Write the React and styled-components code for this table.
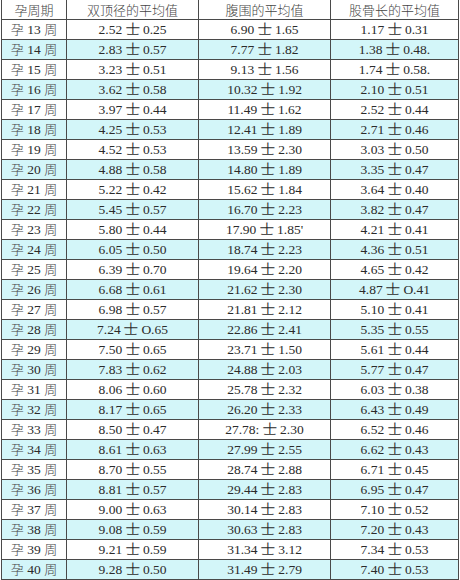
import React from "react";
import styled, { createGlobalStyle } from "styled-components";

const Global = createGlobalStyle`
  html, body { margin: 0; padding: 0; background: #ffffff; }
  body { font-family: "Liberation Serif", "Noto Sans CJK SC", serif; }
`;

const Wrap = styled.div`
  padding: 0 2px 0 1px;
  width: 460px;
  box-sizing: border-box;
`;

const Table = styled.table`
  width: 457px;
  border-collapse: collapse;
  table-layout: fixed;
  color: #2b2b2b;
  font-size: 13.5px;
`;

const Row = styled.tr`
  height: 19.9px;
  background: ${(p) => (p.$alt ? "#d3f6f9" : "#ffffff")};
`;

const Cell = styled.td`
  border: 1px solid #4a4a4a;
  padding: 0;
  text-align: center;
  vertical-align: middle;
  line-height: 18px;
  white-space: nowrap;
`;

const Head = styled(Cell).attrs({ as: "th" })`
  font-weight: 300;
  font-family: "Noto Sans CJK SC", sans-serif;
  font-size: 13px;
  color: #444;
  border-top: none;
`;

const Week = styled.span`
  font-family: "Noto Sans CJK SC", sans-serif;
  font-weight: 300;
  font-size: 13px;
  color: #444;
`;

const Num = styled.span`
  font-family: "Liberation Serif", serif;
  font-size: 13.5px;
`;

const data = [
  [13, "2.52 士 0.25", "6.90 士 1.65", "1.17 士 0.31"],
  [14, "2.83 士 0.57", "7.77 士 1.82", "1.38 士 0.48."],
  [15, "3.23 士 0.51", "9.13 士 1.56", "1.74 士 0.58."],
  [16, "3.62 士 0.58", "10.32 士 1.92", "2.10 士 0.51"],
  [17, "3.97 士 0.44", "11.49 士 1.62", "2.52 士 0.44"],
  [18, "4.25 士 0.53", "12.41 士 1.89", "2.71 士 0.46"],
  [19, "4.52 士 0.53", "13.59 士 2.30", "3.03 士 0.50"],
  [20, "4.88 士 0.58", "14.80 士 1.89", "3.35 士 0.47"],
  [21, "5.22 士 0.42", "15.62 士 1.84", "3.64 士 0.40"],
  [22, "5.45 士 0.57", "16.70 士 2.23", "3.82 士 0.47"],
  [23, "5.80 士 0.44", "17.90 士 1.85'", "4.21 士 0.41"],
  [24, "6.05 士 0.50", "18.74 士 2.23", "4.36 士 0.51"],
  [25, "6.39 士 0.70", "19.64 士 2.20", "4.65 士 0.42"],
  [26, "6.68 士 0.61", "21.62 士 2.30", "4.87 士 O.41"],
  [27, "6.98 士 0.57", "21.81 士 2.12", "5.10 士 0.41"],
  [28, "7.24 士 O.65", "22.86 士 2.41", "5.35 士 0.55"],
  [29, "7.50 士 0.65", "23.71 士 1.50", "5.61 士 0.44"],
  [30, "7.83 士 0.62", "24.88 士 2.03", "5.77 士 0.47"],
  [31, "8.06 士 0.60", "25.78 士 2.32", "6.03 士 0.38"],
  [32, "8.17 士 0.65", "26.20 士 2.33", "6.43 士 0.49"],
  [33, "8.50 士 0.47", "27.78: 士 2.30", "6.52 士 0.46"],
  [34, "8.61 士 0.63", "27.99 士 2.55", "6.62 士 0.43"],
  [35, "8.70 士 0.55", "28.74 士 2.88", "6.71 士 0.45"],
  [36, "8.81 士 0.57", "29.44 士 2.83", "6.95 士 0.47"],
  [37, "9.00 士 0.63", "30.14 士 2.83", "7.10 士 0.52"],
  [38, "9.08 士 0.59", "30.63 士 2.83", "7.20 士 0.43"],
  [39, "9.21 士 0.59", "31.34 士 3.12", "7.34 士 0.53"],
  [40, "9.28 士 0.50", "31.49 士 2.79", "7.40 士 0.53"],
];

export default function App() {
  return (
    <>
      <Global />
      <Wrap>
        <Table>
          <colgroup>
            <col style={{ width: 65 }} />
            <col style={{ width: 132 }} />
            <col style={{ width: 132 }} />
            <col style={{ width: 128 }} />
          </colgroup>
          <thead>
            <Row>
              <Head>孕周期</Head>
              <Head>双顶径的平均值</Head>
              <Head>腹围的平均值</Head>
              <Head>股骨长的平均值</Head>
            </Row>
          </thead>
          <tbody>
            {data.map(([w, a, b, c], i) => (
              <Row key={w} $alt={i % 2 === 1}>
                <Cell>
                  <Week>孕</Week> <Num>{w}</Num> <Week>周</Week>
                </Cell>
                <Cell>
                  <Num>{a}</Num>
                </Cell>
                <Cell>
                  <Num>{b}</Num>
                </Cell>
                <Cell>
                  <Num>{c}</Num>
                </Cell>
              </Row>
            ))}
          </tbody>
        </Table>
      </Wrap>
    </>
  );
}
